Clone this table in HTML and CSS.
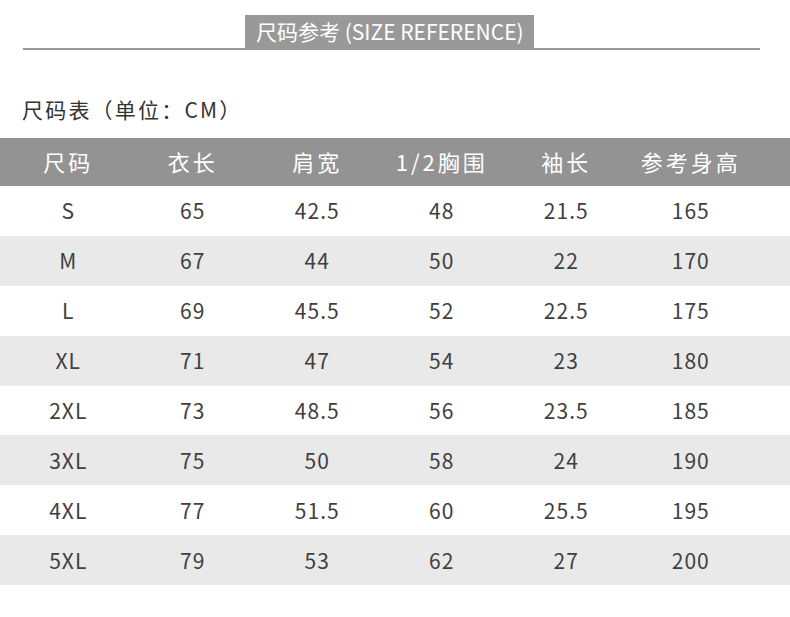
FILE: index.html
```html
<!DOCTYPE html>
<html lang="zh">
<head>
<meta charset="utf-8">
<title>尺码参考</title>
<link rel="stylesheet" href="styles.css">
</head>
<body>
<div class="page">
  <div class="title-bar">
    <div class="title">尺码参考 (SIZE REFERENCE)</div>
  </div>
  <div class="subtitle">尺码表（单位：CM）</div>
  <div class="table">
    <div class="row head">
      <div class="cell">尺码</div><div class="cell">衣长</div><div class="cell">肩宽</div><div class="cell">1/2胸围</div><div class="cell">袖长</div><div class="cell">参考身高</div>
    </div>
    <div class="row">
      <div class="cell">S</div><div class="cell">65</div><div class="cell">42.5</div><div class="cell">48</div><div class="cell">21.5</div><div class="cell">165</div>
    </div>
    <div class="row alt">
      <div class="cell">M</div><div class="cell">67</div><div class="cell">44</div><div class="cell">50</div><div class="cell">22</div><div class="cell">170</div>
    </div>
    <div class="row">
      <div class="cell">L</div><div class="cell">69</div><div class="cell">45.5</div><div class="cell">52</div><div class="cell">22.5</div><div class="cell">175</div>
    </div>
    <div class="row alt">
      <div class="cell">XL</div><div class="cell">71</div><div class="cell">47</div><div class="cell">54</div><div class="cell">23</div><div class="cell">180</div>
    </div>
    <div class="row">
      <div class="cell">2XL</div><div class="cell">73</div><div class="cell">48.5</div><div class="cell">56</div><div class="cell">23.5</div><div class="cell">185</div>
    </div>
    <div class="row alt">
      <div class="cell">3XL</div><div class="cell">75</div><div class="cell">50</div><div class="cell">58</div><div class="cell">24</div><div class="cell">190</div>
    </div>
    <div class="row">
      <div class="cell">4XL</div><div class="cell">77</div><div class="cell">51.5</div><div class="cell">60</div><div class="cell">25.5</div><div class="cell">195</div>
    </div>
    <div class="row alt">
      <div class="cell">5XL</div><div class="cell">79</div><div class="cell">53</div><div class="cell">62</div><div class="cell">27</div><div class="cell">200</div>
    </div>
  </div>
</div>
</body>
</html>
```
FILE: styles.css
```css
* { box-sizing: border-box; }
html, body { margin: 0; padding: 0; background: #fff; }
body {
  width: 790px;
  height: 617px;
  overflow: hidden;
  font-family: "Noto Sans CJK SC", "Noto Sans", sans-serif;
  color: #404040;
}
.page { padding-top: 15px; }
.title-bar {
  margin: 0 30px 0 23px;
  border-bottom: 2px solid #999;
  display: flex;
  padding-left: 222px;
}
.title {
  background: #999;
  color: #fff;
  font-size: 21px;
  line-height: 33px;
  height: 33px;
  padding: 0 10px 0 11px;
  white-space: nowrap;
}
.subtitle {
  margin: 44px 0 0 22px;
  font-size: 21px;
  line-height: 30px;
  letter-spacing: 2.2px;
  color: #333;
}
.table { margin-top: 14px; }
.row {
  display: grid;
  grid-template-columns: repeat(6, 124.5px);
  padding-left: 6px;
  height: 49.875px;
  align-items: center;
  font-size: 21px;
  letter-spacing: 1px;
}
.row.head {
  height: 48px;
  background: #939393;
  color: #fff;
  font-size: 22px;
  letter-spacing: 3px;
  padding-bottom: 3px;
}
.row.alt { background: #e9e9e9; }
.cell { text-align: center; line-height: 1; }
```
